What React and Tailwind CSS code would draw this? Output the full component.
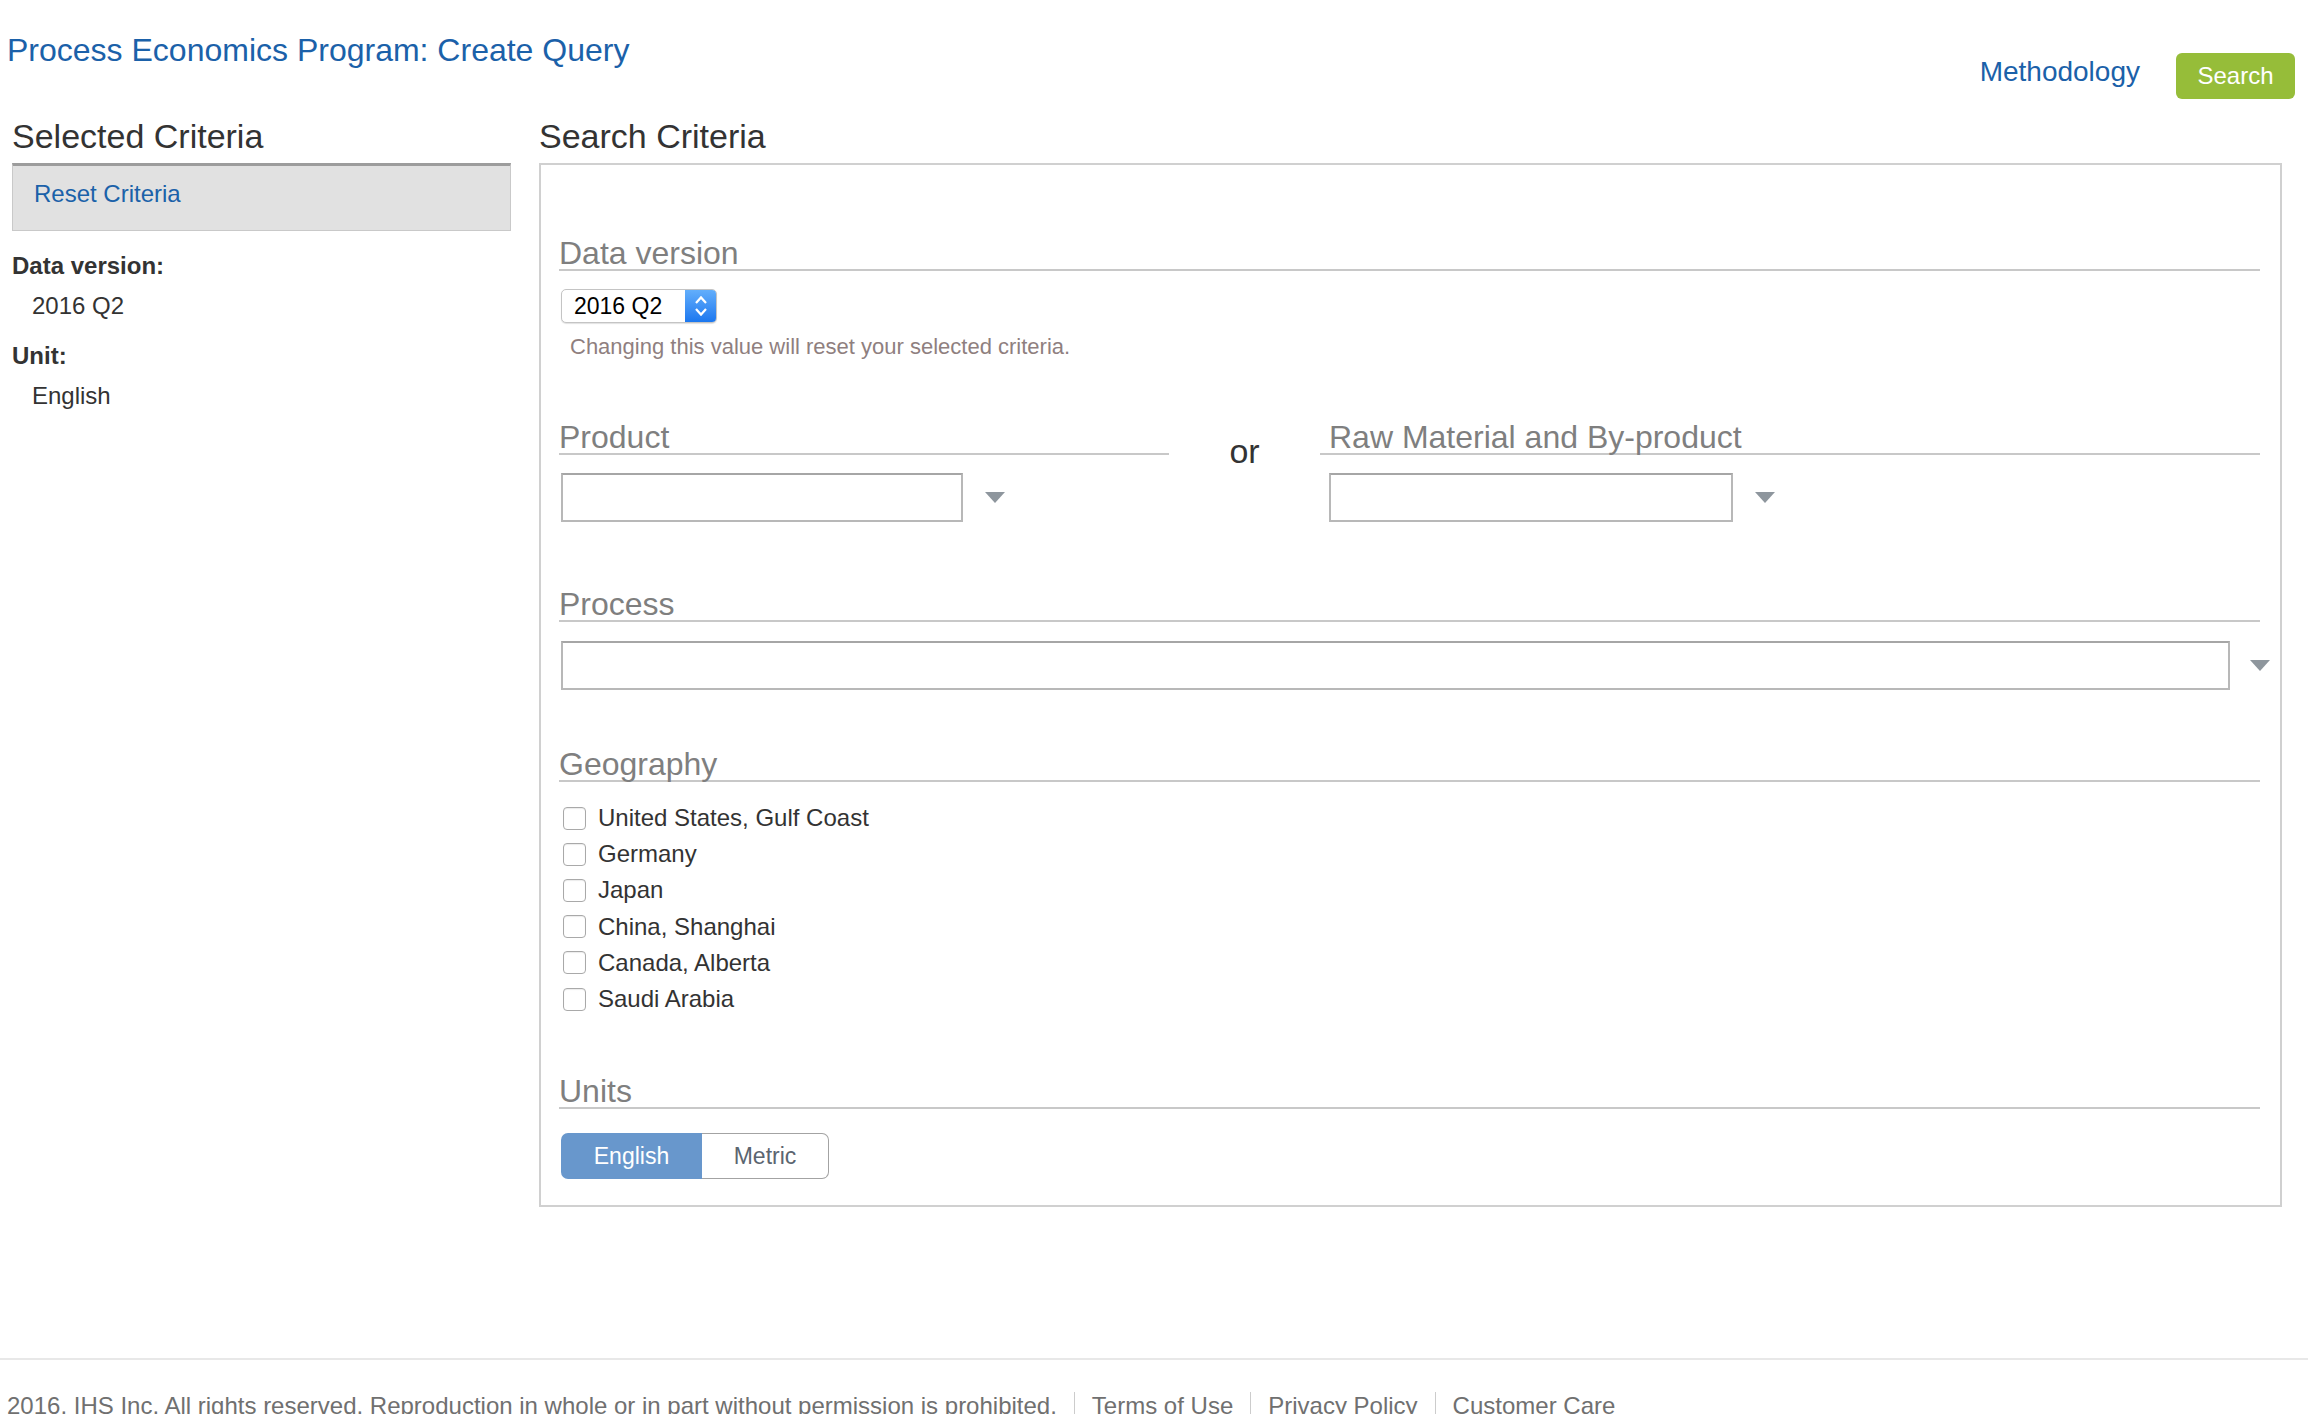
import React from "react";

function Tri({ className }) {
  return (
    <svg className={className} width="20" height="11" viewBox="0 0 20 11">
      <polygon points="0,0 20,0 10,11" fill="#8e969d" />
    </svg>
  );
}

function SectionHeading({ children, className }) {
  return (
    <div className={"pt-[5px] text-[32px] leading-[31px] text-[#7f7f7f] border-b-2 border-[#c8c8c8] " + (className || "")}>
      {children}
    </div>
  );
}

export default function App() {
  const geos = [
    "United States, Gulf Coast",
    "Germany",
    "Japan",
    "China, Shanghai",
    "Canada, Alberta",
    "Saudi Arabia",
  ];
  return (
    <div className="w-[2308px] h-[1414px] overflow-hidden bg-white font-['Liberation_Sans',Arial,sans-serif] text-[#333]">
      <header className="flex justify-between h-[112px]">
        <h1 className="mt-[31px] ml-[7px] text-[32px] leading-[38px] text-[#1b61a9]">
          Process Economics Program: Create Query
        </h1>
        <div className="flex items-start mt-[53px] mr-[13px]">
          <a className="mt-[3px] text-[28px] leading-[32px] text-[#1b61a9]">Methodology</a>
          <button className="ml-[36px] w-[119px] h-[46px] rounded-[6px] bg-[#96bd39] text-white text-[24px] leading-[28px]">
            Search
          </button>
        </div>
      </header>

      <main className="flex pl-[12px] pr-[26px] gap-[28px]">
        <aside className="w-[499px] shrink-0">
          <h2 className="mt-[4px] mb-[7px] text-[34px] leading-[40px] text-[#333]">Selected Criteria</h2>
          <div className="h-[68px] bg-[#e1e1e1] border border-[#c9c9c9] border-t-[3px] border-t-[#9c9c9c] pl-[21px] pt-[14px]">
            <a className="text-[24px] leading-[28px] text-[#1b61a9]">Reset Criteria</a>
          </div>
          <div className="mt-[21px] text-[24px] leading-[28px] font-bold text-[#333]">Data version:</div>
          <div className="mt-[12px] pl-[20px] text-[24px] leading-[28px] text-[#333]">2016 Q2</div>
          <div className="mt-[22px] text-[24px] leading-[28px] font-bold text-[#333]">Unit:</div>
          <div className="mt-[12px] pl-[20px] text-[24px] leading-[28px] text-[#333]">English</div>
        </aside>

        <section className="flex-1 min-w-0">
          <h2 className="mt-[4px] mb-[7px] text-[34px] leading-[40px] text-[#333]">Search Criteria</h2>
          <div className="border-2 border-[#d0d0d0] pt-[68px] pl-[18px] pr-[20px] pb-[26px]">
            <SectionHeading>Data version</SectionHeading>
            <div className="mt-[18px] ml-[2px] flex w-[156px] h-[34px] rounded-[5px] border border-[#c4c4c4] bg-white shadow-[0_1px_1px_rgba(0,0,0,0.12)] overflow-hidden">
              <div className="flex-1 flex items-center pl-[12px] text-[23px] text-black">2016 Q2</div>
              <div className="w-[31px] h-full flex items-center justify-center bg-gradient-to-b from-[#62aefb] to-[#1a77ef]">
                <svg width="16" height="26" viewBox="0 0 16 26">
                  <polyline points="3,10 8,4.5 13,10" fill="none" stroke="white" strokeWidth="2.2" />
                  <polyline points="3,16 8,21.5 13,16" fill="none" stroke="white" strokeWidth="2.2" />
                </svg>
              </div>
            </div>
            <div className="mt-[11px] ml-[11px] text-[22px] leading-[26px] text-[#8f7f7f]">
              Changing this value will reset your selected criteria.
            </div>

            <div className="flex mt-[57px]">
              <div className="w-[610px] shrink-0">
                <SectionHeading>Product</SectionHeading>
                <div className="flex items-center mt-[18px] ml-[2px]">
                  <div className="w-[402px] h-[49px] border-2 border-[#b8b8b8] border-t-[#a6a6a6] bg-white" />
                  <Tri className="ml-[22px]" />
                </div>
              </div>
              <div className="w-[151px] shrink-0 text-center pt-[14px] text-[34px] leading-[40px] text-[#333]">or</div>
              <div className="flex-1 min-w-0">
                <SectionHeading className="pl-[9px]">Raw Material and By-product</SectionHeading>
                <div className="flex items-center mt-[18px] pl-[9px]">
                  <div className="w-[404px] h-[49px] border-2 border-[#b8b8b8] border-t-[#a6a6a6] bg-white" />
                  <Tri className="ml-[22px]" />
                </div>
              </div>
            </div>

            <SectionHeading className="mt-[62px]">Process</SectionHeading>
            <div className="flex items-center mt-[19px] ml-[2px] -mr-[10px]">
              <div className="flex-1 min-w-0 h-[49px] border-2 border-[#b8b8b8] border-t-[#a6a6a6] bg-white" />
              <Tri className="ml-[20px] shrink-0" />
            </div>

            <SectionHeading className="mt-[54px]">Geography</SectionHeading>
            <div className="mt-[18px]">
              {geos.map((g) => (
                <label key={g} className="flex items-center h-[36.2px]">
                  <span className="ml-[4px] w-[23px] h-[23px] rounded-[4px] border border-[#a9a9a9] bg-white shadow-[inset_0_1px_1px_rgba(0,0,0,0.08)]" />
                  <span className="ml-[12px] text-[24px] leading-[28px] text-[#333]">{g}</span>
                </label>
              ))}
            </div>

            <SectionHeading className="mt-[54px]">Units</SectionHeading>
            <div className="mt-[24px] ml-[2px] flex h-[46px]">
              <div className="w-[141px] h-full rounded-l-[7px] bg-[#6897cc] text-white text-[23px] flex items-center justify-center">
                English
              </div>
              <div className="w-[127px] h-full rounded-r-[7px] border-[1.5px] border-l-0 border-[#a3a3a3] bg-white text-[#5b6570] text-[23px] flex items-center justify-center">
                Metric
              </div>
            </div>
          </div>
        </section>
      </main>

      <footer className="mt-[151px] border-t-2 border-[#e8e8e8]">
        <div className="flex items-center mt-[32px] pl-[7px] text-[24px] leading-[28px] text-[#707070]">
          <span>2016. IHS Inc. All rights reserved. Reproduction in whole or in part without permission is prohibited.</span>
          <a className="ml-[17px] pl-[17px] border-l border-[#cccccc]">Terms of Use</a>
          <a className="ml-[17px] pl-[17px] border-l border-[#cccccc]">Privacy Policy</a>
          <a className="ml-[17px] pl-[17px] border-l border-[#cccccc]">Customer Care</a>
        </div>
      </footer>
    </div>
  );
}
